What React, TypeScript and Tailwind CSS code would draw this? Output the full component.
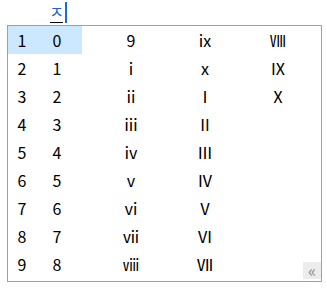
import React from "react";

const cols: string[][] = [
  ["0", "1", "2", "3", "4", "5", "6", "7", "8"],
  ["9", "ⅰ", "ⅱ", "ⅲ", "ⅳ", "ⅴ", "ⅵ", "ⅶ", "ⅷ"],
  ["ⅸ", "ⅹ", "Ⅰ", "Ⅱ", "Ⅲ", "Ⅳ", "Ⅴ", "Ⅵ", "Ⅶ"],
  ["Ⅷ", "Ⅸ", "Ⅹ", "", "", "", "", "", ""],
];

export default function App() {
  const font = { fontFamily: '"Noto Sans CJK KR", "Noto Sans", sans-serif' };
  return (
    <div className="w-[327px] h-[290px] bg-white text-black" style={font}>
      <div className="relative h-[25px]">
        <div className="absolute left-[50px] top-[1px] w-[13px] h-[22px] flex flex-col items-center">
          <span className="text-[16px] leading-[20px] text-[#1d63d6]">ㅈ</span>
          <div className="w-[13px] h-[1px] bg-black mt-[1px]" />
        </div>
        <div className="absolute left-[65px] top-[2px] w-[2px] h-[21px] bg-[#1a6be0]" />
      </div>
      <div className="relative ml-[7px] w-[315px] h-[257px] border border-[#a0a0a0]">
        <div className="flex flex-col">
          {Array.from({ length: 9 }).map((_, r) => (
            <div key={r} className="flex h-[28px] items-center text-[16px] leading-[28px]">
              <div className={`flex w-[74px] h-[28px] ${r === 0 ? "bg-[#cce8ff]" : ""}`}>
                <div className="w-[28px] text-center">{r + 1}</div>
                <div className="flex-1 text-center pr-[4px]">{cols[0][r]}</div>
              </div>
              <div className="ml-[12px] w-[74px] text-center">{cols[1][r]}</div>
              <div className="w-[74px] text-center">{cols[2][r]}</div>
              <div className="w-[74px] text-center pr-[2px]">{cols[3][r]}</div>
            </div>
          ))}
        </div>
        <div className="absolute right-0 bottom-[2px] w-[18px] h-[17px] bg-[#ececec] flex items-center justify-center text-[#8a8a8a] text-[17px] leading-none pb-[2px]">
          «
        </div>
      </div>
    </div>
  );
}
